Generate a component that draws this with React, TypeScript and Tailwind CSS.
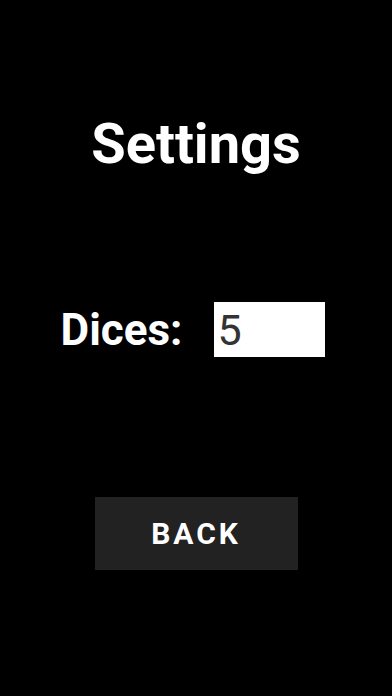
export default function App() {
  return (
    <div className="flex min-h-[696px] w-full flex-col items-center bg-black pt-[116px] font-['Roboto',sans-serif] text-white">
      <h1 className="text-[56px] font-bold leading-none">Settings</h1>

      <div className="mt-[130px] flex items-center gap-[32px] pr-[6px]">
        <span className="text-[44px] font-bold leading-none">Dices:</span>
        <input
          type="text"
          defaultValue="5"
          className="h-[55px] w-[111px] bg-white pl-[3px] text-[43px] leading-none text-[#333333] outline-none"
        />
      </div>

      <button className="mt-[140px] flex h-[73px] w-[203px] items-center justify-center bg-[#222222] text-[30px] font-bold leading-none tracking-[3px] text-white">
        BACK
      </button>
    </div>
  )
}
